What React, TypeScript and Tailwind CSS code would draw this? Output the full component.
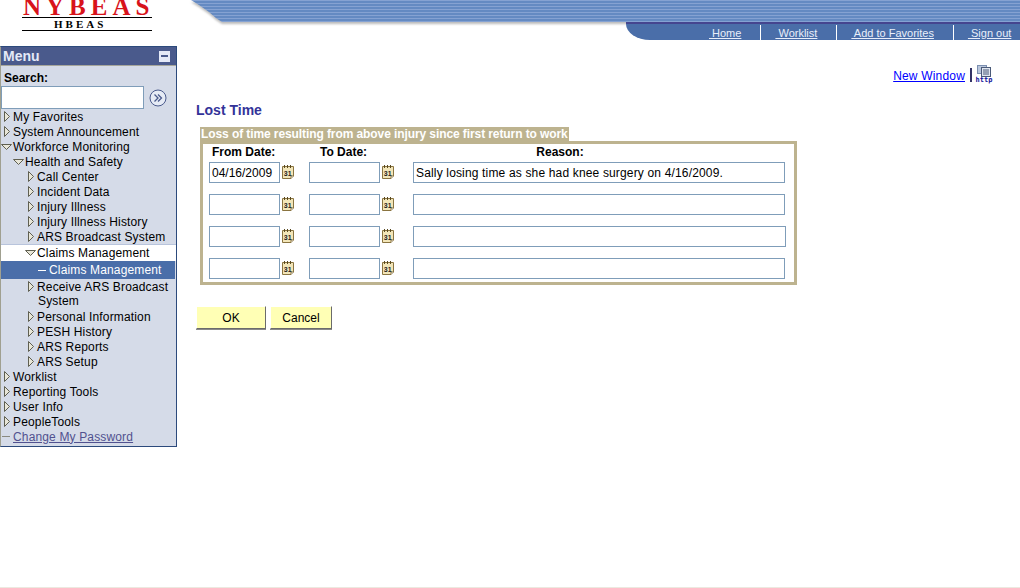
import { type JSX } from 'react'

type Row = { label: string; indent: number; icon: 'right' | 'down' | 'dash'; kind?: 'open' | 'active' | 'link'; extra?: string }

const rows: Row[] = [
  { label: 'My Favorites', indent: 2, icon: 'right' },
  { label: 'System Announcement', indent: 2, icon: 'right' },
  { label: 'Workforce Monitoring', indent: 0, icon: 'down' },
  { label: 'Health and Safety', indent: 12, icon: 'down' },
  { label: 'Call Center', indent: 26, icon: 'right' },
  { label: 'Incident Data', indent: 26, icon: 'right' },
  { label: 'Injury Illness', indent: 26, icon: 'right' },
  { label: 'Injury Illness History', indent: 26, icon: 'right' },
  { label: 'ARS Broadcast System', indent: 26, icon: 'right' },
  { label: 'Claims Management', indent: 24, icon: 'down', kind: 'open' },
  { label: 'Claims Management', indent: 37, icon: 'dash', kind: 'active' },
  { label: 'Receive ARS Broadcast', indent: 26, icon: 'right', extra: 'System' },
  { label: 'Personal Information', indent: 26, icon: 'right' },
  { label: 'PESH History', indent: 26, icon: 'right' },
  { label: 'ARS Reports', indent: 26, icon: 'right' },
  { label: 'ARS Setup', indent: 26, icon: 'right' },
  { label: 'Worklist', indent: 2, icon: 'right' },
  { label: 'Reporting Tools', indent: 2, icon: 'right' },
  { label: 'User Info', indent: 2, icon: 'right' },
  { label: 'PeopleTools', indent: 2, icon: 'right' },
  { label: 'Change My Password', indent: 1, icon: 'dash', kind: 'link' },
]

function TreeIcon({ type, light }: { type: Row['icon']; light?: boolean }): JSX.Element {
  if (type === 'right') {
    return (
      <svg width="8" height="11" viewBox="0 0 8 11" className="shrink-0">
        <path d="M1.5 0.5 L6.5 5.5 L1.5 10.5 Z" fill="#e8e6d8" stroke="#5f5f50" strokeWidth="1" />
      </svg>
    )
  }
  if (type === 'down') {
    return (
      <svg width="11" height="8" viewBox="0 0 11 8" className="shrink-0">
        <path d="M0.5 1.5 L10.5 1.5 L5.5 6.5 Z" fill="#e8e6d8" stroke="#5f5f50" strokeWidth="1" />
      </svg>
    )
  }
  return <span className={`block h-px w-[8px] shrink-0 ${light ? 'bg-white' : 'bg-[#8a8a80]'}`} />
}

function MenuRow({ row }: { row: Row }): JSX.Element {
  const bg =
    row.kind === 'open'
      ? 'bg-white border-t border-[#b8c4dc] h-[17px] gap-[1px]'
      : row.kind === 'active'
        ? 'bg-[#4a6ea9] text-white h-[18px] gap-[3px] mr-px'
        : row.kind === 'link'
          ? 'h-[15px] gap-[3px]'
          : row.icon === 'down'
            ? 'h-[15px] gap-[1px]'
            : 'h-[15px] gap-[2px]'
  return (
    <>
      <div className={`flex items-center text-[12px] tracking-[0.15px] whitespace-nowrap ${bg}`} style={{ paddingLeft: row.indent }}>
        <TreeIcon type={row.icon} light={row.kind === 'active'} />
        <span className={row.kind === 'link' ? 'text-[#51518f] underline' : ''}>{row.label}</span>
      </div>
      {row.extra && <div className="h-[15px] pl-[37px] text-[12px] leading-[15px] tracking-[0.15px]">{row.extra}</div>}
    </>
  )
}

function CalendarIcon(): JSX.Element {
  return (
    <svg width="13" height="15" viewBox="0 0 13 15" className="shrink-0">
      <path d="M0.5 1.5 H11.5 V11 L9 13.5 H0.5 Z" fill="#f3e6b8" stroke="#8a7440" />
      <path d="M9 13.5 V11 H11.5" fill="#fff" stroke="#8a7440" />
      <path d="M2.5 0 V3 M5.5 0 V3 M8.5 0 V3" stroke="#5a4a20" />
      <text x="5.7" y="10.5" textAnchor="middle" fontSize="7" fontWeight="700" fontFamily="'Liberation Sans', sans-serif" fill="#222">31</text>
    </svg>
  )
}

function HttpIcon(): JSX.Element {
  return (
    <div className="flex w-[18px] flex-col items-center">
      <svg width="14" height="12" viewBox="0 0 14 12">
        <rect x="0.5" y="0.5" width="9" height="8" fill="#b9c6dc" stroke="#7b8fb0" />
        <rect x="4.5" y="2.5" width="9" height="9" fill="#dfe5ef" stroke="#4a5a78" />
        <path d="M6 5 H12 M6 7 H12 M6 9 H12" stroke="#4a5a78" />
      </svg>
      <span className="h-[7px] font-['DejaVu_Sans_Mono',monospace] text-[7px] leading-[7px] font-bold text-[#111199]">http</span>
    </div>
  )
}

function DateField({ value }: { value?: string }): JSX.Element {
  return (
    <div className="flex items-center gap-[2px]">
      <input
        readOnly
        value={value ?? ''}
        className="h-[21px] w-[71px] border border-[#7f9db9] bg-white px-[2px] text-[12px] text-black outline-none"
      />
      <CalendarIcon />
    </div>
  )
}

const lostRows = [
  { from: '04/16/2009', reason: 'Sally losing time as she had knee surgery on 4/16/2009.', w: 'w-[372px]' },
  { from: '', reason: '', w: 'w-[372px]' },
  { from: '', reason: '', w: 'w-[373px]' },
  { from: '', reason: '', w: 'w-[372px]' },
]

export default function App(): JSX.Element {
  return (
    <div className="h-[588px] w-[1020px] overflow-hidden border-b border-[#ece9e0] bg-white font-['Liberation_Sans',Arial,sans-serif] text-black">
      <header className="relative flex h-[40px]">
        <div className="h-[40px] w-[190px] shrink-0 overflow-hidden pl-[22px]">
          <div className="-mt-[6px] h-[24px] w-[130px] border-b border-black pl-[1px] font-['Liberation_Serif',serif] text-[25px] leading-[25px] font-bold tracking-[5px] whitespace-nowrap text-[#d8131b]">
            NYBEAS
          </div>
          <div className="h-[13px] w-[130px] border-b border-black pl-[32px] font-['Liberation_Serif',serif] text-[11px] leading-[12px] font-bold tracking-[3px]">
            HBEAS
          </div>
        </div>
        <div className="flex min-w-0 flex-1 flex-col">
          <div className="drop-shadow-[0_2px_1px_#bbbbbb]">
            <div className="h-[22px] bg-[repeating-linear-gradient(180deg,#85a2d2_0px,#85a2d2_1px,#648ac2_1px,#648ac2_3px)] [clip-path:polygon(1px_0,100%_0,100%_100%,32px_100%,26px_18px,19px_12px,9px_5px)]" />
          </div>
          <nav className="z-10 ml-auto flex h-[18px] w-[394px] items-start rounded-bl-[24px_16px] border-t-2 border-[#45458f] bg-[#4a6ea9] text-[11px] text-[#e8eefa]">
            <div className="flex h-full items-end pl-[83px]">
              <a className="-mb-[1px] underline whitespace-pre"> Home</a>
            </div>
            <span className="mt-[1px] ml-[19px] h-[15px] w-px bg-white" />
            <div className="flex h-full items-end pl-[14px]">
              <a className="-mb-[1px] underline whitespace-pre"> Worklist</a>
            </div>
            <span className="mt-[1px] ml-[19px] h-[15px] w-px bg-white" />
            <div className="flex h-full items-end pl-[14px]">
              <a className="-mb-[1px] underline whitespace-pre"> Add to Favorites</a>
            </div>
            <span className="mt-[1px] ml-[19px] h-[15px] w-px bg-white" />
            <div className="flex h-full items-end pl-[14px]">
              <a className="-mb-[1px] underline whitespace-pre"> Sign out</a>
            </div>
          </nav>
        </div>
      </header>

      <div className="flex pt-[6px]">
        <aside className="h-[401px] w-[177px] shrink-0 border-t border-r border-b border-l border-[#2c4a7c] border-l-[#a0a090] bg-[#d5dbe8]">
          <div className="flex h-[19px] items-center justify-between border-b border-[#a6a69a] bg-[#4a5a8c] pr-[6px] pl-[2px] text-[14px] font-bold text-[#e4e9f7]">
            <span>Menu</span>
            <span className="flex h-[11px] w-[11px] items-center justify-center bg-[#e4e9f7]">
              <span className="h-[2px] w-[7px] bg-[#4a5a8c]" />
            </span>
          </div>
          <div className="pt-[5px] pl-[3px] text-[12px] leading-[14px] font-bold">Search:</div>
          <div className="mt-[1px] flex items-center">
            <input readOnly className="h-[23px] w-[143px] border border-[#7f9db9] bg-white outline-none" />
            <svg width="18" height="18" viewBox="0 0 18 18" className="ml-[5px]">
              <circle cx="9" cy="9" r="8" fill="#e6ebf5" stroke="#4a5a8c" />
              <path d="M5.5 5.5 L9 9 L5.5 12.5 M9 5.5 L12.5 9 L9 12.5" fill="none" stroke="#4a5a8c" strokeWidth="1.3" />
            </svg>
          </div>
          <div>
            {rows.map((r, i) => (
              <MenuRow key={i} row={r} />
            ))}
          </div>
        </aside>

        <main className="min-w-0 flex-1 pl-[19px]">
          <div className="flex h-[56px] items-start justify-end pt-[19px] pr-[27px] text-[12px]">
            <a className="mt-[4px] leading-[14px] tracking-[0.18px] text-[#0000ff] underline">New Window</a>
            <span className="mt-[3px] mr-[3px] ml-[5px] h-[14px] w-[2px] bg-[#333366]" />
            <HttpIcon />
          </div>
          <h1 className="text-[14px] leading-[16px] font-bold text-[#333399]">Lost Time</h1>
          <div className="mt-[9px] ml-[4px] w-[369px] bg-[#bdb38f] pl-[1px] text-[12px] leading-[14px] font-bold tracking-[-0.09px] whitespace-nowrap text-white">
            Loss of time resulting from above injury since first return to work
          </div>
          <div className="ml-[4px] h-[144px] w-[597px] border-[3px] border-[#bdb38f]">
            <div className="flex h-[18px] text-[12px] leading-[16px] font-bold">
              <span className="w-[100px] pl-[9px]">From Date:</span>
              <span className="w-[104px] pl-[17px]">To Date:</span>
              <span className="w-[306px] text-center">Reason:</span>
            </div>
            <div className="flex flex-col gap-[11px]">
              {lostRows.map((r, i) => (
                <div key={i} className="flex h-[21px] items-center pl-[6px]">
                  <DateField value={r.from} />
                  <div className="ml-[14px]">
                    <DateField />
                  </div>
                  <input
                    readOnly
                    value={r.reason}
                    className={`ml-[18px] h-[21px] border border-[#7f9db9] bg-white px-[2px] text-[12px] tracking-[0.16px] text-black outline-none ${r.w}`}
                  />
                </div>
              ))}
            </div>
          </div>
          <div className="mt-[21px] flex gap-[4px] text-[12px]">
            <button className="h-[23px] w-[70px] border border-t-white border-r-[#6b6b6b] border-b-[#6b6b6b] border-l-white bg-[#ffffb5] shadow-[0_1px_0_#8a8a8a]">OK</button>
            <button className="h-[23px] w-[62px] border border-t-white border-r-[#6b6b6b] border-b-[#6b6b6b] border-l-white bg-[#ffffb5] shadow-[0_1px_0_#8a8a8a]">Cancel</button>
          </div>
        </main>
      </div>
    </div>
  )
}
